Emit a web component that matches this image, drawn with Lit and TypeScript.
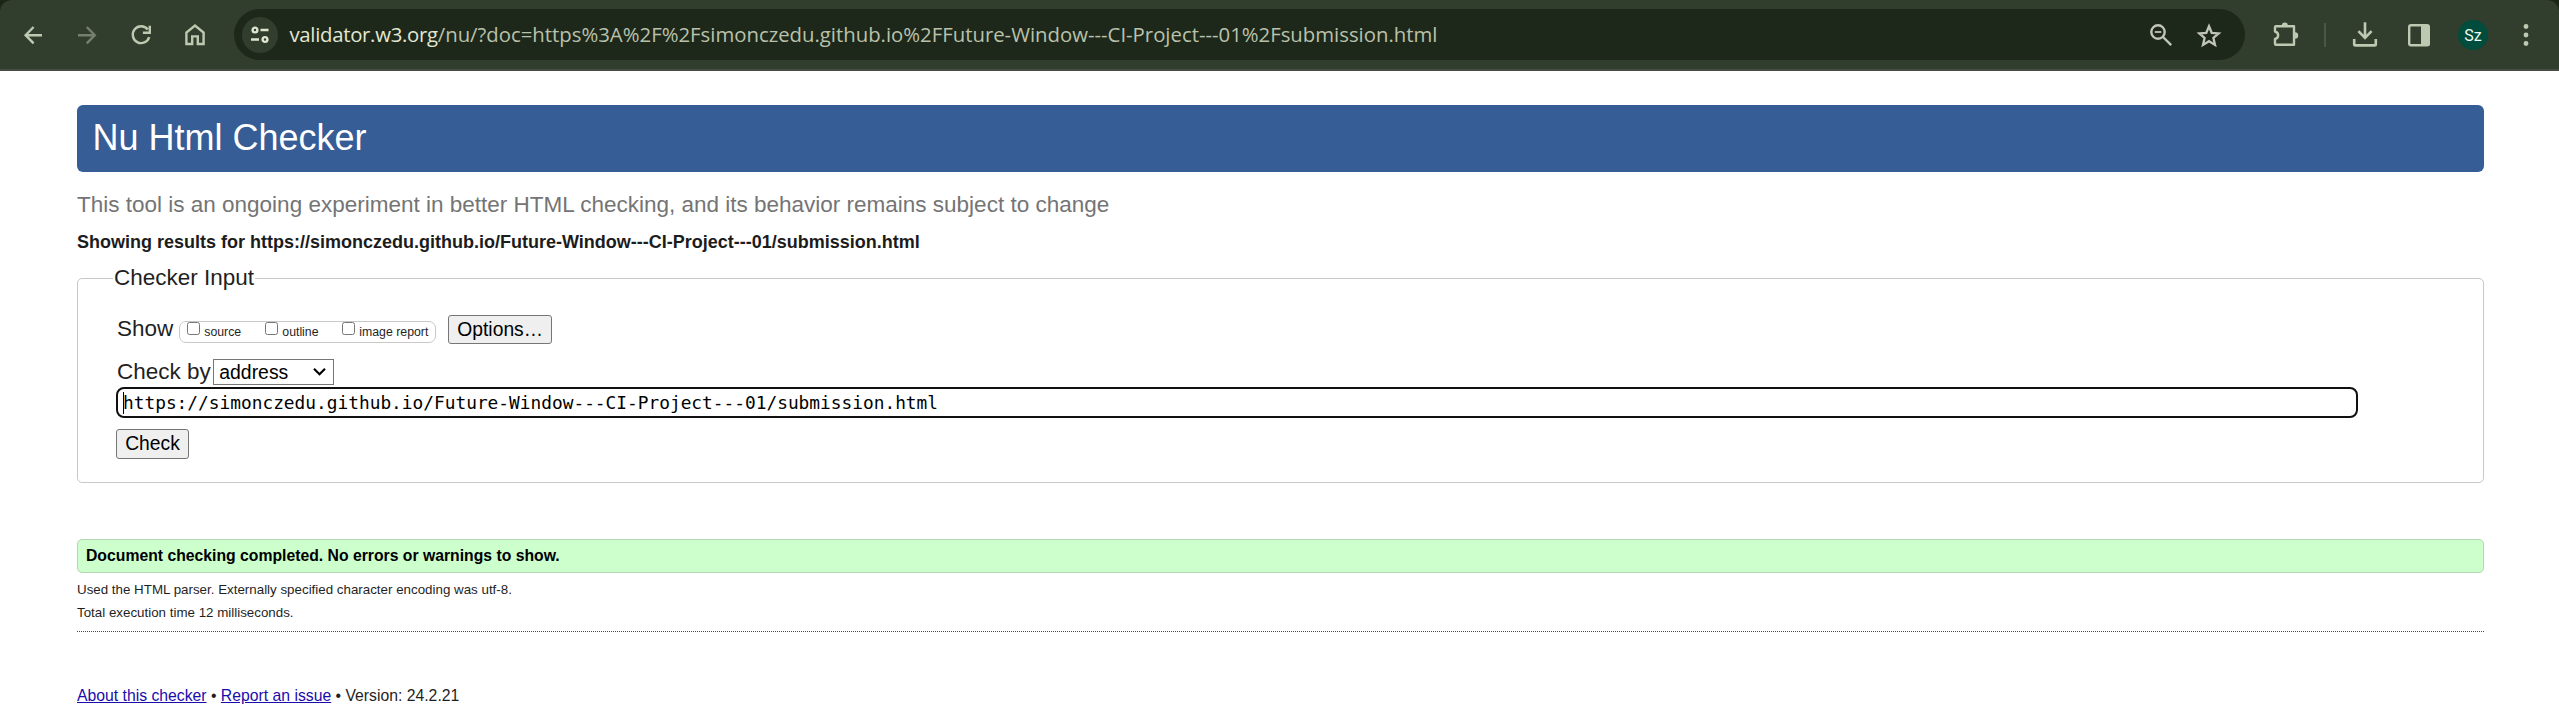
import { LitElement, html, css, svg } from "lit";
import { customElement, property } from "lit/decorators.js";

const TARGET = "https://simonczedu.github.io/Future-Window---CI-Project---01/submission.html";

@customElement("browser-toolbar")
class BrowserToolbar extends LitElement {
  static styles = css`
    :host {
      display: block;
      background: #1b2617;
    }
    .bar {
      box-sizing: border-box;
      height: 71px;
      padding: 9px 20px 9px 21px;
      border-bottom: 2px solid #464b44;
      border-radius: 12px 12px 0 0;
      background: #323e2d;
      display: flex;
      align-items: center;
      color: #bdcab1;
    }
    svg {
      display: block;
      flex: none;
      fill: none;
      stroke: currentColor;
      stroke-width: 2.4;
    }
    .nav {
      display: flex;
      gap: 30px;
      width: 213px;
      flex: none;
    }
    .off {
      color: #75806c;
    }
    .omni {
      flex: 1;
      min-width: 0;
      height: 51px;
      border-radius: 26px;
      background: #1d281a;
      display: flex;
      align-items: center;
      box-sizing: border-box;
      padding: 0 23px 0 8px;
    }
    .site {
      width: 36px;
      height: 36px;
      border-radius: 50%;
      background: #323e2d;
      color: #dfe5cf;
      display: flex;
      align-items: center;
      justify-content: center;
      flex: none;
    }
    .url {
      flex: 1;
      font: 20.34px/30px "Open Sans", "Noto Sans", sans-serif;
      padding: 0 0 1px 11.5px;
      color: #b9c1ab;
      white-space: nowrap;
    }
    .host {
      color: #e2e7d2;
      letter-spacing: -0.29px;
    }
    .inner {
      display: flex;
      gap: 22px;
      color: #c0c5b7;
    }
    .tools {
      width: 294px;
      flex: none;
      display: flex;
      align-items: center;
      padding-left: 27px;
      box-sizing: border-box;
    }
    .rule {
      width: 2px;
      height: 24px;
      background: #4b5746;
      margin: 0 26px 0 25px;
    }
    .panel {
      margin-left: 28px;
    }
    .me {
      width: 30px;
      height: 30px;
      border-radius: 50%;
      background: #004c3d;
      color: #f1fbf5;
      font: 16px/31px Roboto, sans-serif;
      text-align: center;
      margin: 0 0 0 26px;
    }
    .dots {
      margin-left: 28px;
      fill: currentColor;
      stroke: none;
    }
  `;

  render() {
    return html`<div class="bar">
      <div class="nav">
        <svg width="24" height="26" viewBox="0 0 24 26"><path d="M21 13.2H4.7M12.6 5 4.6 13.2l8 8.2" /></svg>
        <svg class="off" width="24" height="26" viewBox="0 0 24 26"><path d="M3 13.2h16.500M11.800 5l8 8.200-8 8.200" /></svg>
        <svg width="24" height="26" viewBox="0 0 24 26"><path d="M18.700 7.400A8.400 8.400 0 1 0 20.200 15.200M20.800 3.800V10.700H13.900" /></svg>
        <svg width="24" height="26" viewBox="0 0 24 26"><path d="M3.400 22V10.500L12 3.500l8.600 7V22H14.800V14.400H9.200V22Z" /></svg>
      </div>
      <div class="omni">
        <div class="site">
          <svg width="22" height="20" viewBox="0 0 22 20">
            <circle cx="6" cy="5" r="2.400" /><path d="M11.500 5h8M2 14.500h8" /><circle cx="16" cy="14.500" r="2.400" />
          </svg>
        </div>
        <div class="url"><span class="host">validator.w3.org</span>/nu/?doc=https%3A%2F%2Fsimonczedu.github.io%2FFuture-Window---CI-Project---01%2Fsubmission.html</div>
        <div class="inner">
          <svg width="26" height="26" viewBox="0 0 26 26">
            <circle cx="10" cy="10" r="6.700" /><path d="M15 15l8.200 8.200" /><path d="M6.800 10h6.500" stroke-width="1.800" />
          </svg>
          <svg width="26" height="26" viewBox="0 0 26 26">
            <path stroke-width="2.300" d="M13 4.300l2.700 6.500 7 .6-5.300 4.600 1.600 6.900-6-3.700-6 3.700 1.600-6.900-5.300-4.600 7-.6Z" />
          </svg>
        </div>
      </div>
      <div class="tools">
        <svg width="27" height="27" viewBox="0 0 27 27">
          <path stroke-linejoin="round" d="M4 5.200H22V23.800H4c-.6 0-1-.4-1-1V18c4.200-1.200 4.200-6.400 0-7.500V6.200c0-.6.400-1 1-1Z" />
          <path fill="currentColor" stroke="none" d="M9.800 4.700a3.100 3.100 0 0 1 6.200 0ZM23 11.300a3.200 3.200 0 0 1 0 6.400Z" />
        </svg>
        <div class="rule"></div>
        <svg width="26" height="27" viewBox="0 0 26 27">
          <path stroke-width="2.600" d="M13 1.200V16M6.400 10.200l6.600 6.600 6.600-6.600M2.200 18v5.200c0 .8.400 1.200 1.200 1.200h19.200c.8 0 1.200-.4 1.200-1.200V18" />
        </svg>
        <svg class="panel" width="26" height="26" viewBox="0 0 26 26">
          <rect x="3.200" y="3.200" width="19.600" height="20" rx="1.800" /><path fill="currentColor" stroke="none" d="M15 3h7c1 0 1.500.5 1.500 1.500v18c0 1-.5 1.500-1.500 1.500h-7Z" />
        </svg>
        <div class="me">Sz</div>
        <svg class="dots" width="20" height="24" viewBox="0 0 20 24">
          ${[3.5, 12, 20.5].map((y) => svg`<circle cx="10" cy=${y} r="2.400" />`)}
        </svg>
      </div>
    </div>`;
  }
}

@customElement("app-root")
class AppRoot extends LitElement {
  @property({ attribute: false }) show = ["source", "outline", "image report"];

  static styles = css`
    :host {
      display: block;
      min-height: 710px;
      background: #fff;
      color: #1f1f1f;
      font-family: "Liberation Sans", Arial, sans-serif;
    }
    main {
      padding: 34px 75px 0 77px;
      display: flex;
      flex-direction: column;
      white-space: nowrap;
    }
    h1 {
      margin: 0;
      height: 67px;
      box-sizing: border-box;
      padding-left: 15.5px;
      border-radius: 6px;
      background: #365d95;
      color: #fff;
      font-weight: 400;
      font-size: 36px;
      line-height: 66px;
    }
    .sub {
      margin: 18px 0 0;
      font-size: 22.5px;
      line-height: 30px;
      color: #747474;
    }
    h2 {
      margin: 12px 0 13px;
      font-size: 18px;
      line-height: 20px;
      color: #1c1c1c;
    }
    fieldset {
      box-sizing: border-box;
      margin: 0;
      height: 218px;
      min-width: 0;
      border: 1px solid #c8c8c8;
      border-radius: 5px;
      padding: 24px 125px 0 39px;
      font-size: 22.5px;
      line-height: 26px;
    }
    legend {
      margin-left: -4px;
      padding: 0 1px;
    }
    .row {
      display: flex;
    }
    .options {
      height: 29px;
    }
    .word {
      line-height: 27px;
    }
    .group {
      margin: 6px 12px 0 6px;
      width: 257px;
      height: 22px;
      box-sizing: border-box;
      border: 1px solid #c8c8c8;
      border-radius: 7px;
      padding-left: 7px;
      display: grid;
      grid-template-columns: 78px 77px auto;
    }
    .check {
      display: flex;
      font-size: 12.3px;
      line-height: 20px;
      gap: 4px;
    }
    .check i {
      width: 13px;
      height: 13px;
      box-sizing: border-box;
      border: 1px solid #767676;
      border-radius: 2.500px;
      background: #fff;
    }
    .btn {
      box-sizing: border-box;
      border: 1px solid #767676;
      border-radius: 3px;
      background: #efefef;
      color: #000;
      font: 19.300px/27px "Liberation Sans", Arial, sans-serif;
      height: 29px;
      padding: 0 8px;
    }
    .by {
      margin-top: 15px;
      height: 26px;
    }
    .by > span {
      line-height: 25px;
    }
    .select {
      margin-left: 2.500px;
      width: 121px;
      height: 26px;
      box-sizing: border-box;
      border: 1px solid #767676;
      display: flex;
      align-items: center;
      justify-content: space-between;
      padding: 0 6px 0 5px;
      color: #000;
      font-size: 19.400px;
      line-height: 24px;
    }
    .field {
      margin: 2px 0 11px -1px;
      height: 31px;
      box-sizing: border-box;
      border: 2px solid #101010;
      border-radius: 8px;
      padding-left: 5px;
      color: #000;
      font: 17.820px/27px "DejaVu Sans Mono", monospace;
      display: flex;
      align-items: center;
    }
    .caret {
      width: 1px;
      height: 22px;
      margin-right: -1px;
      background: #000;
    }
    .submit {
      margin-left: -1px;
      height: 30px;
      line-height: 26px;
      width: 73px;
    }
    .success {
      margin-top: 56px;
      height: 34px;
      box-sizing: border-box;
      border: 1px solid #b3d6b3;
      border-radius: 5px;
      background: #cfc;
      color: #000;
      padding-left: 8px;
      font-weight: 700;
      font-size: 15.750px;
      line-height: 32px;
    }
    .notes {
      margin-top: 5px;
      padding-bottom: 7px;
      border-bottom: 1px dotted #4a4a4a;
      font-size: 13.350px;
      line-height: 23px;
    }
    .foot {
      margin-top: 54px;
      font-size: 15.750px;
      line-height: 20px;
    }
    .foot a {
      color: #1a0dab;
      text-decoration: underline;
    }
  `;

  render() {
    return html`
      <browser-toolbar></browser-toolbar>
      <main>
        <h1>Nu Html Checker</h1>
        <p class="sub">This tool is an ongoing experiment in better HTML checking, and its behavior remains subject to change</p>
        <h2>Showing results for ${TARGET}</h2>
        <fieldset>
          <legend>Checker Input</legend>
          <div class="row options">
            <span class="word">Show</span>
            <div class="group">${this.show.map((s) => html`<label class="check"><i></i><span>${s}</span></label>`)}</div>
            <button class="btn">Options…</button>
          </div>
          <div class="row by">
            <span>Check by</span>
            <div class="select">
              <span>address</span>
              <svg width="15" height="10" viewBox="0 0 15 10"><path d="M2 1.700 7.500 7.200 13 1.700" fill="none" stroke="#000" stroke-width="2.200" /></svg>
            </div>
          </div>
          <div class="field"><span class="caret"></span><span>${TARGET}</span></div>
          <button class="btn submit">Check</button>
        </fieldset>
        <div class="success">Document checking completed. No errors or warnings to show.</div>
        <div class="notes">
          <div>Used the HTML parser. Externally specified character encoding was utf-8.</div>
          <div>Total execution time 12 milliseconds.</div>
        </div>
        <div class="foot"><a>About this checker</a> • <a>Report an issue</a> • Version: 24.2.21</div>
      </main>
    `;
  }
}
